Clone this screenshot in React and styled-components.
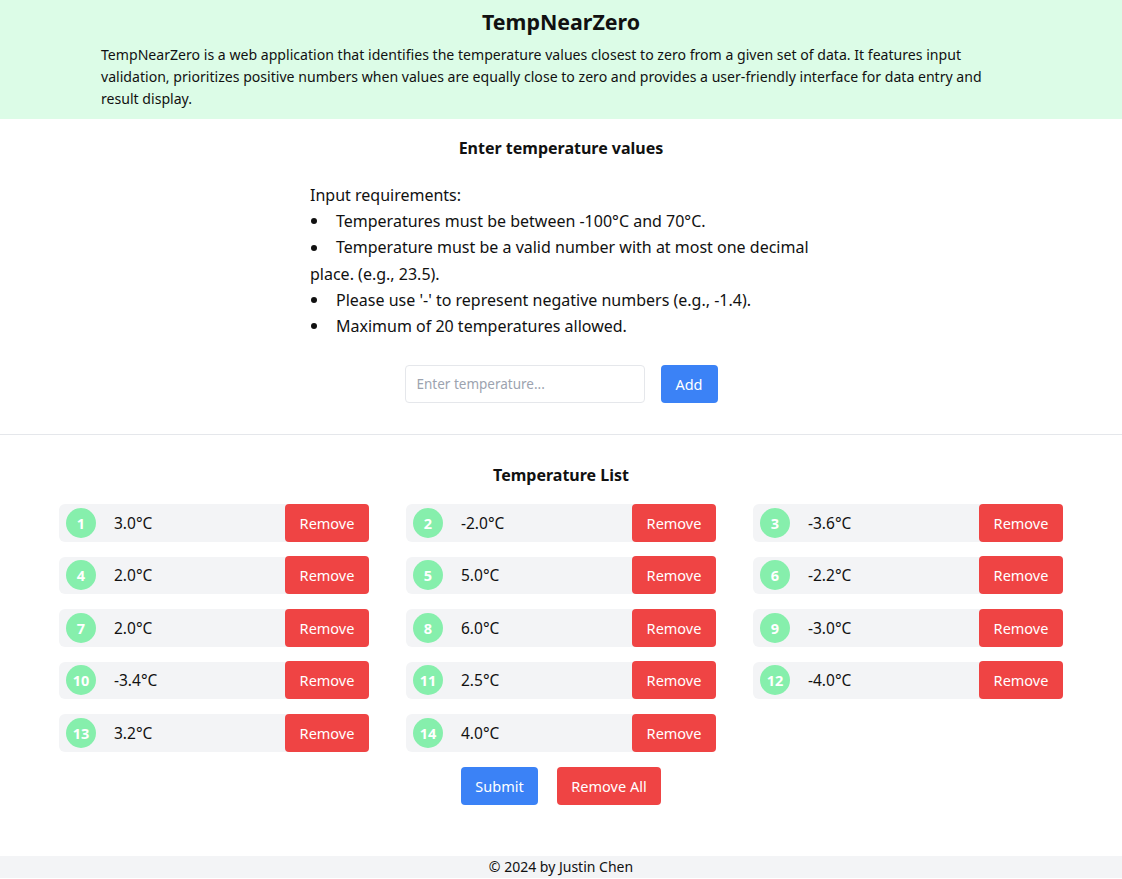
import React, { useState } from 'react'
import styled, { createGlobalStyle } from 'styled-components'

const GlobalStyle = createGlobalStyle`
    body {
        margin: 0;
        font-family: "Noto Sans", "Open Sans", sans-serif;
        color: #111;
        background: #fff;
    }
`

const initial = [3.0, -2.0, -3.6, 2.0, 5.0, -2.2, 2.0, 6.0, -3.0, -3.4, 2.5, -4.0, 3.2, 4.0]

const App = () => {
    const [temps, setTemps] = useState(initial)
    const [value, setValue] = useState('')

    return (
        <Page>
            <GlobalStyle />
            <Header>
                <Title>TempNearZero</Title>
                <Intro>
                    TempNearZero is a web application that identifies the temperature values closest to zero from a given set of data. It features input validation, prioritizes positive numbers when values are equally close to zero and provides a user-friendly interface for data entry and result display.
                </Intro>
            </Header>
            <EntrySection>
                <SectionTitle>Enter temperature values</SectionTitle>
                <Requirements>
                    <p>Input requirements:</p>
                    <ul>
                        <li>Temperatures must be between -100°C and 70°C.</li>
                        <li>Temperature must be a valid number with at most one decimal place. (e.g., 23.5).</li>
                        <li>Please use '-' to represent negative numbers (e.g., -1.4).</li>
                        <li>Maximum of 20 temperatures allowed.</li>
                    </ul>
                </Requirements>
                <InputRow>
                    <TempInput
                        placeholder="Enter temperature..."
                        value={value}
                        onChange={e => setValue(e.target.value)}
                    />
                    <Button $color="blue" $w={57}>Add</Button>
                </InputRow>
            </EntrySection>
            <ListSection>
                <SectionTitle>Temperature List</SectionTitle>
                <Grid>
                    {temps.map((t, i) => (
                        <Item key={i}>
                            <Badge>{i + 1}</Badge>
                            <Temp>{t.toFixed(1)}°C</Temp>
                            <Button $color="red" $w={84} onClick={() => setTemps(temps.filter((_, j) => j !== i))}>Remove</Button>
                        </Item>
                    ))}
                </Grid>
                <Actions>
                    <Button $color="blue" $w={77}>Submit</Button>
                    <Button $color="red" $w={104} onClick={() => setTemps([])}>Remove All</Button>
                </Actions>
            </ListSection>
            <Footer>© 2024 by Justin Chen</Footer>
        </Page>
    )
}

const Page = styled.div`
    min-height: 100vh;
    display: flex;
    flex-direction: column;
`
const Header = styled.header`
    background: #dcfce7;
    padding: 8px 0 9px;
    text-align: center;
`
const Title = styled.h1`
    margin: 0 0 8px;
    font-size: 21.4px;
    line-height: 28px;
    font-weight: 700;
`
const Intro = styled.p`
    margin: 0 auto;
    width: 920px;
    text-align: left;
    font-size: 14.1px;
    line-height: 22px;
`
const EntrySection = styled.section`
    padding: 17px 0 31px;
    border-bottom: 1px solid #e5e7eb;
    display: flex;
    flex-direction: column;
    align-items: center;
`
const SectionTitle = styled.h2`
    margin: 0;
    font-size: 16px;
    line-height: 24px;
    font-weight: 700;
    text-align: center;
`
const Requirements = styled.div`
    width: 502px;
    margin-top: 22px;
    font-size: 16px;
    line-height: 26.2px;
    p { margin: 0; }
    ul {
        margin: 0;
        padding: 0;
        list-style: none;
    }
    li::before {
        content: "";
        display: inline-block;
        width: 6px;
        height: 6px;
        border-radius: 50%;
        background: #111;
        margin: 0 19px 3px 1px;
        vertical-align: middle;
    }
`
const InputRow = styled.div`
    display: flex;
    gap: 16px;
    margin-top: 26px;
`
const TempInput = styled.input`
    width: 240px;
    height: 38px;
    box-sizing: border-box;
    border: 1px solid #e5e7eb;
    border-radius: 4px;
    padding: 0 11px;
    font-family: inherit;
    font-size: 13.5px;
    outline: none;
    &::placeholder { color: #9ca3af; }
`
const Button = styled.button`
    width: ${p => p.$w}px;
    height: 38px;
    border: none;
    border-radius: 4px;
    background: ${p => (p.$color === 'red' ? '#ef4444' : '#3b82f6')};
    color: #fff;
    font-family: inherit;
    font-size: 14.5px;
    cursor: pointer;
    padding: 0;
`
const ListSection = styled.section`
    padding: 28px 0 51px;
    display: flex;
    flex-direction: column;
    align-items: center;
`
const Grid = styled.div`
    width: 1004px;
    margin-top: 17px;
    display: grid;
    grid-template-columns: repeat(3, 310px);
    column-gap: 37px;
    row-gap: 15px;
`
const Item = styled.div`
    display: flex;
    align-items: center;
    height: 37.5px;
    background: #f3f4f6;
    border-radius: 6px;
    padding-left: 7px;
    button { margin-left: auto; }
`
const Badge = styled.span`
    width: 30px;
    height: 30px;
    border-radius: 50%;
    background: #86efac;
    color: #fff;
    font-weight: 700;
    font-size: 14.5px;
    display: flex;
    align-items: center;
    justify-content: center;
`
const Temp = styled.span`
    margin-left: 18px;
    font-size: 15.5px;
`
const Actions = styled.div`
    display: flex;
    gap: 19px;
    margin-top: 15px;
`
const Footer = styled.footer`
    margin-top: auto;
    background: #f3f4f6;
    height: 22px;
    line-height: 22px;
    text-align: center;
    font-size: 14px;
    margin-bottom: 2px;
`

export default App
